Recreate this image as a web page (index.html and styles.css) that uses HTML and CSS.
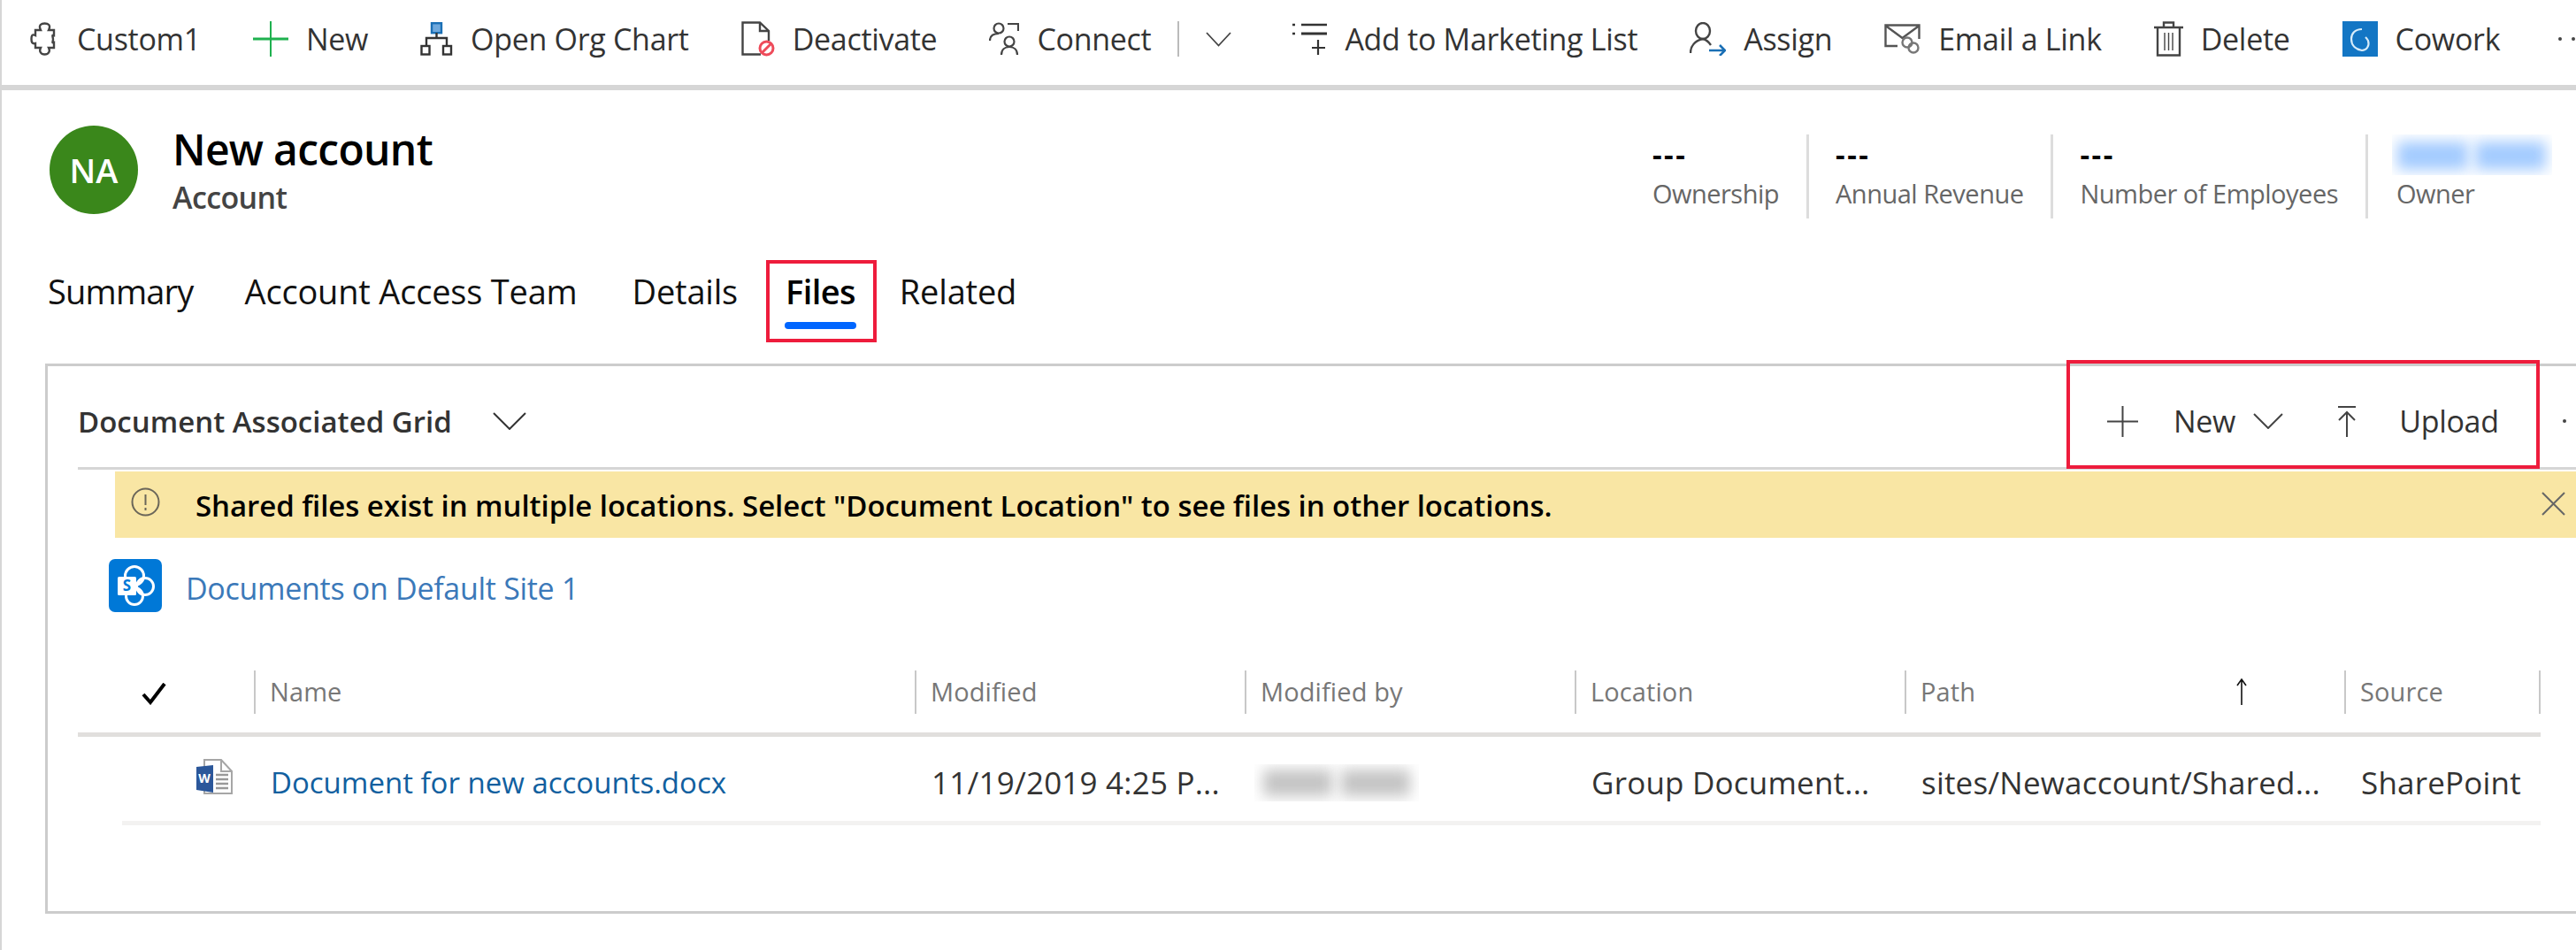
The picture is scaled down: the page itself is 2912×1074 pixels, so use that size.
FILE: index.html
```html
<!DOCTYPE html>
<html lang="en">

<head>
    <meta charset="UTF-8">
    <title>New account</title>
    <link rel="stylesheet" href="styles.css">
</head>

<body>
    <div class="page">
        <div class="cmdbar">
            <div class="cmd">
                <svg class="ic" width="33" height="38" viewBox="0 0 33 38" fill="none" stroke="#444" stroke-width="2.4"><path d="M12 9C9 3 13 1.500 16.500 1.500S24 3 21 9H27V15C24 14 26 17 26 19.500S24 24 27 23V29H21C23 33 21 36.500 16.500 36.500S10 33 12 29H6V24C2 25 1.500 22 1.500 19S2 13 6 15V9Z"/></svg>
                <span>Custom1</span>
            </div>
            <div class="cmd">
                <svg class="ic" width="40" height="40" viewBox="0 0 40 40" fill="none" stroke="#1fb14f"><path stroke-width="2" d="M20 0V40"/><path stroke-width="3" d="M0 20H40"/></svg>
                <span>New</span>
            </div>
            <div class="cmd">
                <svg class="ic" width="37" height="38" viewBox="0 0 37 38" fill="none" stroke="#333" stroke-width="2.400"><rect x="13" y="1.200" width="11" height="11" fill="#6fa8dc" stroke="#1a6fb5"/><path d="M18.500 12V18M7 27V18H30V27"/><rect x="1.500" y="27" width="9" height="9.500"/><rect x="26" y="27" width="9" height="9.500"/></svg>
                <span>Open Org Chart</span>
            </div>
            <div class="cmd">
                <svg class="ic" width="38" height="40" viewBox="0 0 38 40" fill="none"><path d="M22 37.500H1.500V1.500H21L31 11V22M21 1.500V11H31" stroke="#444" stroke-width="2.400"/><circle cx="28.500" cy="30.500" r="7.500" stroke="#ee4b5a" stroke-width="3"/><path d="M23.500 35.500L33.500 25.500" stroke="#ee4b5a" stroke-width="3"/></svg>
                <span>Deactivate</span>
            </div>
            <div class="cmd cmd-split">
                <svg class="ic" width="34" height="38" viewBox="0 0 34 38" fill="none" stroke="#444" stroke-width="2.200"><circle cx="11" cy="7" r="5.500"/><path d="M1 21C1 15 6 13 11 13"/><path d="M21 2H33V10"/><circle cx="23" cy="22" r="5.500"/><path d="M14 37C14 31 18 28 23 28S32 31 32 37"/></svg>
                <span>Connect</span>
                <i class="cmd-sep"></i>
                <svg class="ic" width="29" height="17" viewBox="0 0 29 17" fill="none" stroke="#444" stroke-width="1.800"><path d="M1 1L14.500 15.500L28 1"/></svg>
            </div>
            <div class="cmd">
                <svg class="ic" width="39" height="36" viewBox="0 0 39 36" fill="none" stroke="#333"><path stroke-width="2.400" d="M0 2H3M10 2H39M0 12H3"/><path stroke-width="3" d="M10 12H39"/><path stroke-width="2.200" d="M29 19V36M22 28H37"/></svg>
                <span>Add to Marketing List</span>
            </div>
            <div class="cmd">
                <svg class="ic" width="41" height="38" viewBox="0 0 41 38" fill="none"><ellipse cx="15" cy="10" rx="8" ry="9" stroke="#444" stroke-width="2.400"/><path d="M1 35C1 27 6 21 15 19C19 20 22 23 24 26" stroke="#444" stroke-width="2.400"/><path d="M22 32H39M34 26L40 32L34 38" stroke="#1a6fb5" stroke-width="2.600"/></svg>
                <span>Assign</span>
            </div>
            <div class="cmd">
                <svg class="ic" width="41" height="34" viewBox="0 0 41 34" fill="none" stroke="#555" stroke-width="2.400"><path d="M15 25H1.500V1.500H39.500V17M1.500 2L20.500 16L39.500 2"/><circle cx="26" cy="21" r="5.500" stroke="#777"/><circle cx="33" cy="27" r="5.500" stroke="#777"/></svg>
                <span>Email a Link</span>
            </div>
            <div class="cmd">
                <svg class="ic" width="33" height="40" viewBox="0 0 33 40" fill="none" stroke="#444" stroke-width="2.400"><path d="M0 7H33M11 7V1.500H22V7M4 7V38.500H29V7"/><path stroke-width="1.400" d="M12 13V33M16.500 13V33M21 13V33"/></svg>
                <span>Delete</span>
            </div>
            <div class="cmd">
                <svg class="ic" width="40" height="40" viewBox="0 0 40 40"><rect width="40" height="40" fill="#1376c4"/><path d="M22 9C14 9 10 14 10 20C10 28 16 32 22 33C27 33 31 28 29 22C28 20 27 19 26 18" fill="none" stroke="#d8ecf9" stroke-width="2.200"/></svg>
                <span>Cowork</span>
            </div>
            <div class="dots"><i></i><i></i><i></i></div>
        </div>

        <div class="head">
            <div class="avatar">NA</div>
            <div class="head-title">
                <div class="title">New account</div>
                <div class="subtitle">Account</div>
            </div>
            <div class="stats">
                <div class="stat">
                    <div class="stat-val">---</div>
                    <div class="stat-label">Ownership</div>
                </div>
                <div class="stat">
                    <div class="stat-val">---</div>
                    <div class="stat-label">Annual Revenue</div>
                </div>
                <div class="stat">
                    <div class="stat-val">---</div>
                    <div class="stat-label">Number of Employees</div>
                </div>
                <div class="stat stat-owner">
                    <div class="redact redact-blue"><i></i><i></i></div>
                    <div class="stat-label">Owner</div>
                </div>
            </div>
        </div>

        <div class="tabs">
            <div class="tab tab-summary">Summary</div>
            <div class="tab">Account Access Team</div>
            <div class="tab tab-details">Details</div>
            <div class="tab tab-on">Files<i class="red-box"></i></div>
            <div class="tab tab-related">Related</div>
        </div>

        <div class="panel">
            <div class="panel-head">
                <div class="grid-name">Document Associated Grid</div>
                <svg width="38" height="20" viewBox="0 0 38 20" fill="none" stroke="#333" stroke-width="2"><path d="M1 1L19 19L37 1"/></svg>
                <div class="actions">
                    <i class="red-box"></i>
                    <svg width="35" height="35" viewBox="0 0 35 35" fill="none" stroke="#444" stroke-width="2"><path d="M17.500 0V35M0 17.500H35"/></svg>
                    <span class="act-new">New</span>
                    <svg class="act-chev" width="34" height="18" viewBox="0 0 34 18" fill="none" stroke="#444" stroke-width="2"><path d="M1 1L17 17L33 1"/></svg>
                    <svg class="act-up" width="20" height="35" viewBox="0 0 20 35" fill="none" stroke="#444" stroke-width="2"><path d="M0 1H20M10 7V35M1 16L10 7L19 16"/></svg>
                    <span class="act-upload">Upload</span>
                    <div class="dots dots-panel"><i></i><i></i><i></i></div>
                </div>
            </div>

            <div class="banner">
                <svg width="33" height="33" viewBox="0 0 33 33" fill="none" stroke="#6b6659" stroke-width="2"><circle cx="16.500" cy="16.500" r="15"/><path d="M16.500 8V20M16.500 23V26"/></svg>
                <div class="banner-text">Shared files exist in multiple locations. Select "Document Location" to see files in other locations.</div>
                <svg class="banner-x" width="27" height="27" viewBox="0 0 27 27" fill="none" stroke="#666" stroke-width="2"><path d="M1 1L26 26M26 1L1 26"/></svg>
            </div>

            <div class="location">
                <svg width="60" height="60" viewBox="0 0 60 60"><rect width="60" height="60" rx="7" fill="#0078d7"/><g fill="none" stroke="#fff" stroke-width="3"><circle cx="29" cy="19" r="10.500"/><circle cx="41" cy="31" r="9.500"/><circle cx="29" cy="42" r="9.500"/></g><rect x="10" y="20" width="21" height="21" rx="1.500" fill="#fff"/><text x="20.500" y="36" class="sp-s">S</text></svg>
                <div class="location-link">Documents on Default Site 1</div>
            </div>

            <div class="tbl">
                <div class="tbl-head">
                    <div class="th-check">
                        <svg width="28" height="25" viewBox="0 0 28 25" fill="none" stroke="#000" stroke-width="4"><path d="M2 13L10 22L26 1"/></svg>
                    </div>
                    <div class="th">Name</div>
                    <div class="th">Modified</div>
                    <div class="th">Modified by</div>
                    <div class="th">Location</div>
                    <div class="th th-sort">Path
                        <svg width="12" height="30" viewBox="0 0 12 30" fill="none" stroke="#111" stroke-width="1.600"><path d="M6 1V30M1 8L6 1L11 8"/></svg>
                    </div>
                    <div class="th th-last">Source</div>
                </div>
                <div class="tbl-row">
                    <div class="td-icon">
                        <svg width="41" height="40" viewBox="0 0 41 40"><path d="M9 1H28L40 14V39H9Z" fill="#fff" stroke="#a6a6a6" stroke-width="2"/><path d="M28 1V14H40" fill="none" stroke="#a6a6a6" stroke-width="2"/><path d="M22 18H36M22 23H36M22 28H36M22 33H36" stroke="#999" stroke-width="2.400"/><path d="M0 9L19 7V38L0 35Z" fill="#2b579a"/><text x="9" y="27" class="word-w">W</text></svg>
                    </div>
                    <div class="td td-link">Document for new accounts.docx</div>
                    <div class="td">11/19/2019 4:25 P...</div>
                    <div class="td"><div class="redact redact-gray"><i></i><i></i></div></div>
                    <div class="td">Group Document...</div>
                    <div class="td">sites/Newaccount/Shared...</div>
                    <div class="td">SharePoint</div>
                </div>
            </div>
        </div>
    </div>
</body>

</html>
```

FILE: styles.css
```css
* {
    margin: 0;
    padding: 0;
    box-sizing: border-box;
}
html, body {
    background: #fff;
}
body {
    font-family: "Open Sans", "Liberation Sans", sans-serif;
    color: #333;
}
.page {
    width: 2912px;
    height: 1074px;
    overflow: hidden;
    border-left: 2px solid #d6d6d6;
}
svg {
    display: block;
    flex: none;
}

/* command bar */
.cmdbar {
    height: 102px;
    padding: 0 0 8px 32px;
    border-bottom: 6px solid #d6d6d6;
    display: flex;
    align-items: center;
    gap: 59px;
    font-size: 34px;
    letter-spacing: -0.3px;
    white-space: nowrap;
}
.cmd {
    display: flex;
    align-items: center;
    gap: 20px;
    flex: none;
}
.cmd-split .cmd-sep {
    width: 2px;
    height: 40px;
    margin: 0 10px;
    background: #bbb;
}
.cmd-split {
    margin-right: 10px;
}
.dots {
    display: flex;
    gap: 11px;
    flex: none;
    margin-left: 7px;
}
.dots i {
    width: 4px;
    height: 4px;
    border-radius: 50%;
    background: #444;
}

/* record header */
.head {
    display: flex;
    align-items: flex-start;
    padding: 40px 27px 0 54px;
    height: 201px;
}
.avatar {
    width: 100px;
    height: 100px;
    border-radius: 50%;
    background: #3a871b;
    color: #fff;
    font-size: 38px;
    font-weight: 600;
    line-height: 100px;
    text-align: center;
    flex: none;
}
.head-title {
    margin-left: 39px;
    margin-top: -2px;
}
.title {
    font-size: 48px;
    line-height: 58px;
    font-weight: 600;
    color: #000;
    letter-spacing: -0.7px;
}
.subtitle {
    font-size: 34px;
    line-height: 46px;
    margin-top: 2px;
    font-weight: 600;
    color: #444;
    letter-spacing: -0.6px;
}
.stats {
    margin-left: auto;
    margin-top: 10px;
    display: flex;
}
.stat {
    height: 95px;
    padding: 0 31px 0 30px;
    border-right: 3px solid #ddd;
}
.stat-owner {
    border-right: 0;
    padding: 0 0 0 27px;
    width: 208px;
}
.stat-val {
    font-size: 33px;
    line-height: 46px;
    font-weight: 700;
    color: #000;
    letter-spacing: 2.5px;
}
.stat-label {
    font-size: 29px;
    line-height: 40px;
    margin-top: 1px;
    color: #666;
    letter-spacing: -0.5px;
    white-space: nowrap;
}
.stat-owner .stat-label {
    padding-left: 5px;
}
.redact {
    display: flex;
    overflow: hidden;
}
.redact i {
    display: block;
    filter: blur(8px);
}
.redact-blue {
    width: 181px;
    height: 46px;
    gap: 8px;
    padding: 8px 6px 6px;
}
.redact-blue i {
    width: 80px;
    background: #a3cbff;
}
.redact-gray {
    width: 186px;
    height: 42px;
    margin-left: -8px;
    gap: 10px;
    padding: 6px 10px;
}
.redact-gray i {
    width: 78px;
    background: #c4c4c4;
}

/* tabs */
.tabs {
    display: flex;
    padding-left: 52px;
    gap: 58px;
    font-size: 38px;
    line-height: 52px;
    color: #111;
    letter-spacing: -0.2px;
}
.tab {
    position: relative;
    white-space: nowrap;
}
.tab-summary {
    letter-spacing: -0.8px;
}
.tab-details {
    margin-left: 4px;
}
.tab-on {
    margin-left: -4px;
    font-weight: 600;
    color: #000;
    letter-spacing: -0.6px;
}
.tab-related {
    margin-left: -8px;
}
.tab-on::after {
    content: "";
    position: absolute;
    left: -1px;
    right: -1px;
    top: 61px;
    height: 8px;
    border-radius: 4px;
    background: #0066ff;
}
.red-box {
    position: absolute;
    border: 4px solid #ee1c3c;
    z-index: 5;
}
.tab-on .red-box {
    left: -22px;
    right: -24px;
    top: -9px;
    height: 93px;
}

/* panel */
.panel {
    margin: 56px 0 0 49px;
    height: 622px;
    border: 3px solid #ccc;
    border-right: 0;
}
.panel-head {
    height: 117px;
    margin-left: 34px;
    border-bottom: 3px solid #d6d6d6;
    display: flex;
    align-items: center;
    gap: 46px;
    padding-top: 10px;
}
.grid-name {
    font-size: 33px;
    font-weight: 600;
    color: #333;
    white-space: nowrap;
}
.actions {
    position: relative;
    margin-left: auto;
    display: flex;
    align-items: center;
    flex: none;
    width: 530px;
    font-size: 34px;
    letter-spacing: -0.3px;
}
.actions .red-box {
    left: -46px;
    width: 535px;
    top: -46px;
    height: 123px;
}
.act-new {
    margin-left: 40px;
}
.act-chev {
    margin-left: 20px;
}
.act-up {
    margin-left: 62px;
}
.act-upload {
    margin-left: 49px;
}
.dots-panel {
    margin-left: 72px;
}

.banner {
    height: 75px;
    margin: 2px 0 0 76px;
    background: #f9e6a4;
    display: flex;
    align-items: center;
    padding: 0 12px 6px 18px;
}
.banner-text {
    margin: 7px 0 0 40px;
    font-size: 33px;
    font-weight: 600;
    color: #000;
    letter-spacing: -0.06px;
    white-space: nowrap;
}
.banner-x {
    margin: 3px 0 0 auto;
}

.location {
    margin: 24px 0 0 69px;
    display: flex;
    align-items: center;
    gap: 27px;
}
.location-link {
    font-size: 34px;
    padding-top: 6px;
    color: #3b79b9;
    letter-spacing: -0.3px;
}
.sp-s {
    font-family: "Open Sans", sans-serif;
    font-size: 17px;
    font-weight: 700;
    fill: #0078d7;
    text-anchor: middle;
}
.word-w {
    font-family: "Open Sans", sans-serif;
    font-size: 14px;
    font-weight: 700;
    fill: #fff;
    text-anchor: middle;
}

/* table */
.tbl {
    margin: 66px 0 0 34px;
    width: 2784px;
}
.tbl-head {
    display: grid;
    grid-template-columns: 199px 747px 373px 373px 373px 497px 222px;
    height: 75px;
    border-bottom: 5px solid #e1dfdd;
}
.th-check {
    padding: 14px 0 0 72px;
}
.th {
    height: 49px;
    border-left: 2px solid #c8c8c8;
    padding-left: 16px;
    font-size: 29px;
    line-height: 48px;
    color: #777;
    letter-spacing: 0.1px;
}
.th-sort {
    display: flex;
    justify-content: space-between;
    padding-right: 110px;
}
.th-sort svg {
    margin-top: 9px;
}
.th-last {
    border-right: 2px solid #c8c8c8;
}
.tbl-row {
    display: grid;
    grid-template-columns: 149px 747px 373px 373px 373px 497px 222px;
    height: 100px;
    margin-left: 50px;
    border-bottom: 5px solid #f3f2f1;
}
.td-icon {
    padding: 25px 0 0 84px;
}
.td {
    padding: 8px 0 0 19px;
    font-size: 35px;
    color: #333;
    letter-spacing: 0.2px;
    white-space: nowrap;
    display: flex;
    align-items: center;
}
.td-link {
    font-size: 33px;
    letter-spacing: 0;
    color: #11609f;
}
```
